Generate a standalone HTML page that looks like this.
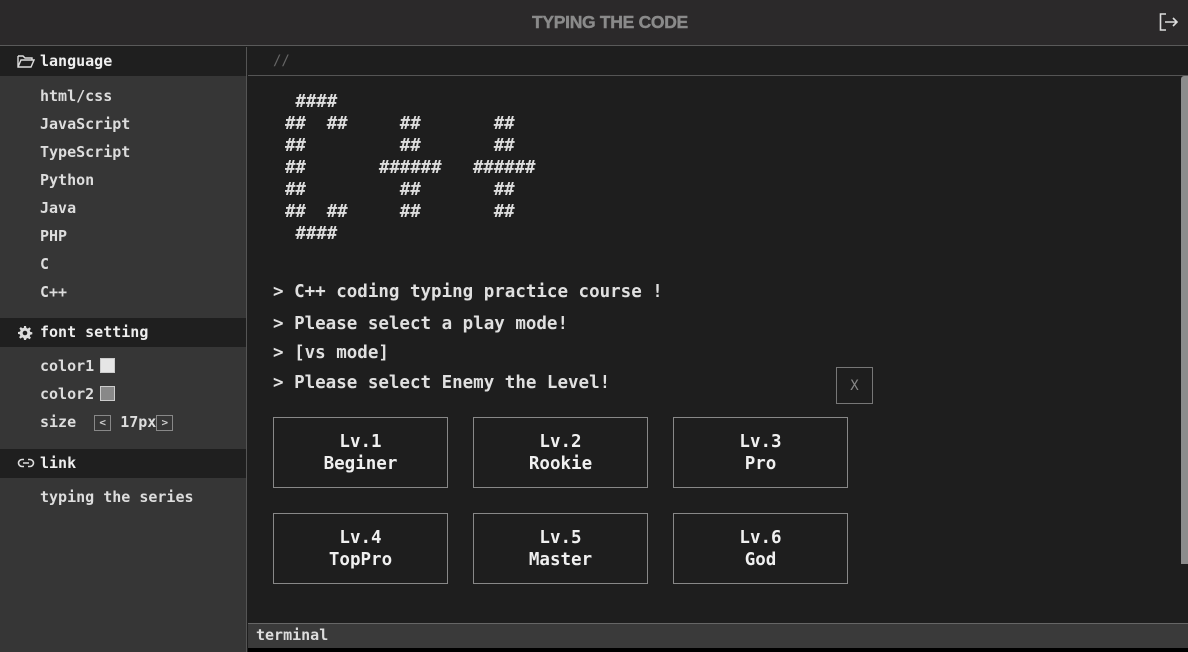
<!DOCTYPE html>
<html><head><meta charset="utf-8"><style>
*{margin:0;padding:0;box-sizing:border-box}
body{width:1188px;height:652px;background:#1e1e1e;font-family:"DejaVu Sans Mono","Liberation Mono",monospace;color:#e6e6e6;overflow:hidden;position:relative}
.hdr{position:absolute;left:0;top:0;width:1188px;height:46px;background:#2b292a;border-bottom:1px solid #5a5a5a}
.title{position:absolute;left:532px;top:12px;font:bold 17.5px "Liberation Sans",sans-serif;color:#8a8a8a;letter-spacing:-0.3px;-webkit-text-stroke:0.4px #8a8a8a}
.side{position:absolute;left:0;top:47px;width:247px;height:605px;background:#363636;border-right:1px solid #555}
.sh{height:29px;background:#1f1f1f;font-size:15px;line-height:29px;padding-left:40px;position:relative;color:#eee;font-weight:bold}
.sh svg{position:absolute;left:17px;top:7px}
.it{font-size:15px;line-height:28px;padding-left:40px;color:#ddd;font-weight:bold}
.sw{display:inline-block;width:15px;height:15px;vertical-align:-2px;border:1px solid #ccc;margin-left:6px}
.ab{display:inline-block;width:17px;height:16px;border:1px solid #888;font-size:11px;line-height:14px;text-align:center;vertical-align:1px;color:#ccc}
.crumb{position:absolute;left:248px;top:47px;width:940px;height:29px;border-bottom:1px solid #555;background:#1e1e1e;color:#666;font-size:14px;line-height:29px;padding-left:25px}
.art{position:absolute;left:285px;top:91px;font-size:17.5px;line-height:22px;white-space:pre;font-weight:bold;color:#ddd;letter-spacing:-0.1px}
.ln{position:absolute;left:273px;font-size:17.5px;font-weight:bold;color:#e0e0e0;white-space:pre}
.x{position:absolute;left:836px;top:367px;width:37px;height:37px;border:1px solid #777;color:#888;font-size:14px;text-align:center;line-height:37px}
.b{position:absolute;width:175px;height:71px;border:1px solid #888;text-align:center;font-size:17.5px;font-weight:bold;line-height:22px;padding-top:13px;color:#f0f0f0}
.sb{position:absolute;left:1181px;top:76px;width:7px;height:488px;background:#8c8c8c;border-radius:3px 0 0 0}
.term{position:absolute;left:248px;top:623px;width:940px;height:25px;background:#3a3a3a;border-top:1px solid #666;font-size:15px;line-height:22px;padding-left:8px;color:#ddd;font-weight:bold}
.bot{position:absolute;left:248px;top:648px;width:940px;height:4px;background:#000}
</style></head><body>
<div class="hdr"><div class="title">TYPING THE CODE</div>
<svg style="position:absolute;left:1159px;top:12px" width="20" height="20" viewBox="0 0 20 20" fill="none" stroke="#ddd" stroke-width="1.6"><path d="M7 2H1.5v16H7"/><path d="M6 10h12M14 6l4 4-4 4"/></svg></div>
<div class="side">
<div class="sh"><svg width="18" height="14" viewBox="0 0 18 14" fill="none" stroke="#ddd" stroke-width="1.4"><path d="M1 2h5l2 2h7v2M1 2v11h13l3-7H4L1 13"/></svg>language</div>
<div style="height:6px"></div>
<div class="it">html/css</div><div class="it">JavaScript</div><div class="it">TypeScript</div><div class="it">Python</div><div class="it">Java</div><div class="it">PHP</div><div class="it">C</div><div class="it">C++</div>
<div style="height:12px"></div>
<div class="sh"><svg width="16" height="16" viewBox="0 0 16 16"><path fill="#ddd" d="M7 1h2l.4 2 1.4.6 1.7-1.2 1.4 1.4-1.2 1.7.6 1.4 2 .4v2l-2 .4-.6 1.4 1.2 1.7-1.4 1.4-1.7-1.2-1.4.6L9 15H7l-.4-2-1.4-.6-1.7 1.2-1.4-1.4 1.2-1.7L2.7 9.2 1 9V7l2-.4.6-1.4-1.2-1.7 1.4-1.4 1.7 1.2 1.4-.6z"/><circle cx="8" cy="8" r="2.3" fill="#1f1f1f"/></svg>font setting</div>
<div style="height:5px"></div>
<div class="it">color1<span class="sw" style="background:#e6e6e6"></span></div>
<div class="it">color2<span class="sw" style="background:#888"></span></div>
<div class="it">size &nbsp;<span class="ab">&lt;</span> 17px<span class="ab">&gt;</span></div>
<div style="height:13px"></div>
<div class="sh"><svg width="18" height="14" viewBox="0 0 18 14" fill="none" stroke="#ddd" stroke-width="1.6"><path d="M7 3.5H5a3.5 3.5 0 000 7h2M11 3.5h2a3.5 3.5 0 010 7h-2M6 7h6"/></svg>link</div>
<div style="height:5px"></div>
<div class="it">typing the series</div>
</div>
<div class="crumb">//</div>
<div class="art"> ####
##  ##     ##       ##
##         ##       ##
##       ######   ######
##         ##       ##
##  ##     ##       ##
 ####</div>
<div class="ln" style="top:282px">&gt; C++ coding typing practice course !</div>
<div class="ln" style="top:314px">&gt; Please select a play mode!</div>
<div class="ln" style="top:343px">&gt; [vs mode]</div>
<div class="ln" style="top:373px">&gt; Please select Enemy the Level!</div>
<div class="x">X</div>
<div class="b" style="left:273px;top:417px">Lv.1<br>Beginer</div>
<div class="b" style="left:473px;top:417px">Lv.2<br>Rookie</div>
<div class="b" style="left:673px;top:417px">Lv.3<br>Pro</div>
<div class="b" style="left:273px;top:513px">Lv.4<br>TopPro</div>
<div class="b" style="left:473px;top:513px">Lv.5<br>Master</div>
<div class="b" style="left:673px;top:513px">Lv.6<br>God</div>
<div class="sb"></div>
<div class="term">terminal</div>
<div class="bot"></div>
</body></html>
